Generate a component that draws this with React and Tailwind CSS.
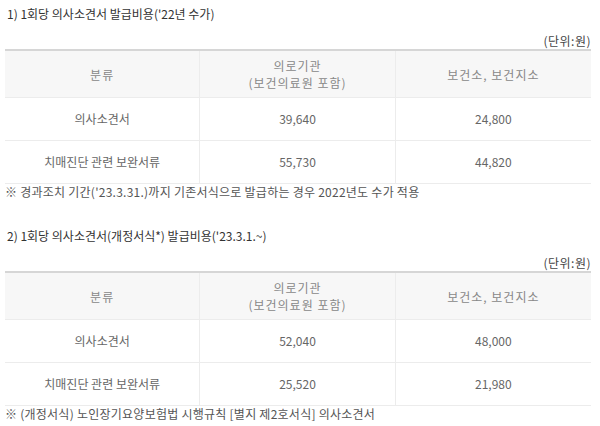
import React from "react";

const font = { fontFamily: '"Noto Sans CJK KR", "Noto Sans", sans-serif' };

function Section({ title, rows, note }) {
  return (
    <div>
      <div className="pl-[7px] text-[12px] leading-[16px] h-[16px] text-[#333] whitespace-nowrap">{title}</div>
      <div className="mt-[11px] pr-[9px] h-[16px] text-right text-[12px] leading-[16px] text-[#444] tracking-[0.5px]">(단위:원)</div>
      <div className="mx-[5px] w-[586px] border-t-2 border-[#d6d6d6]">
        <div className="grid grid-cols-3 bg-[#f7f7f7] h-[46px] text-[12px] leading-[17px] text-[#888] tracking-[1px]">
          <div className="flex items-center justify-center border-r border-[#ececec]">분류</div>
          <div className="flex flex-col items-center justify-center border-r border-[#ececec] text-center">
            <span>의로기관</span>
            <span>(보건의료원 포함)</span>
          </div>
          <div className="flex items-center justify-center">보건소, 보건지소</div>
        </div>
        {rows.map((r, i) => (
          <div key={i} className="grid grid-cols-3 h-[43px] text-[12px] leading-[16px] text-[#666] border-t border-[#ececec]">
            <div className="flex items-center justify-center border-r border-[#ececec]">{r[0]}</div>
            <div className="flex items-center justify-center border-r border-[#ececec]">{r[1]}</div>
            <div className="flex items-center justify-center">{r[2]}</div>
          </div>
        ))}
        <div className="border-t border-[#ececec]" />
      </div>
      <div className="pl-[5px] h-[16px] text-[12px] leading-[16px] text-[#555] tracking-[0.25px] whitespace-nowrap">{note}</div>
    </div>
  );
}

export default function App() {
  return (
    <div className="w-[600px] h-[426px] bg-white overflow-hidden pt-[6px]" style={font}>
      <Section
        title="1) 1회당 의사소견서 발급비용('22년 수가)"
        rows={[
          ["의사소견서", "39,640", "24,800"],
          ["치매진단 관련 보완서류", "55,730", "44,820"],
        ]}
        note="※ 경과조치 기간('23.3.31.)까지 기존서식으로 발급하는 경우 2022년도 수가 적용"
      />
      <div className="h-[28px]" />
      <Section
        title="2) 1회당 의사소견서(개정서식*) 발급비용('23.3.1.~)"
        rows={[
          ["의사소견서", "52,040", "48,000"],
          ["치매진단 관련 보완서류", "25,520", "21,980"],
        ]}
        note="※ (개정서식) 노인장기요양보험법 시행규칙 [별지 제2호서식] 의사소견서"
      />
    </div>
  );
}
